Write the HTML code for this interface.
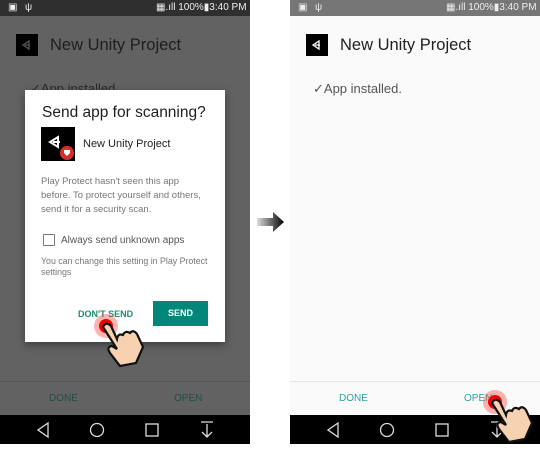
<!DOCTYPE html>
<html><head><style>
*{margin:0;padding:0;box-sizing:border-box}
body{width:540px;height:444px;background:#fff;font-family:"Liberation Sans",sans-serif;position:relative;overflow:hidden}
.a{position:absolute}
.ph{position:absolute;top:0;width:250px;height:444px}
.sb{position:absolute;left:0;top:0;width:250px;height:16px;color:#eee;font-size:10px}
.nav{position:absolute;left:0;top:415px;width:250px;height:29px;background:#000}
.ico{position:absolute;left:16px;top:34px;width:22px;height:22px;background:#000}
.ttl{position:absolute;left:50px;top:36px;font-size:16.5px}
</style></head><body>
<div class="ph" style="left:0;background:#626262">
 <div class="sb" style="background:#2f2f2f">
  <span class="a" style="left:8px;top:2px">&#9635;</span><span class="a" style="left:25px;top:2px">&#968;</span>
  <span class="a" style="left:156px;top:2px">&#9638;.ıll 100%&#9646;3:40 PM</span>
 </div>
 <div class="ico"><svg width="22" height="22"><path d="M7 11l6-4v8z M9 11h5" stroke="#555" fill="none" stroke-width="1.3"/></svg></div>
 <div class="ttl" style="color:#1e1e1e">New Unity Project</div>
 <div class="a" style="left:30px;top:81px;color:#2a2a2a;font-size:13px">✓App installed</div>
 <div class="a" style="left:0;top:381px;width:250px;height:1px;background:#555"></div>
 <div class="a" style="left:49px;top:393px;color:#1f4f4a;font-size:10px">DONE</div>
 <div class="a" style="left:174px;top:393px;color:#1f4f4a;font-size:10px">OPEN</div>
 <div class="a" style="left:25px;top:90px;width:200px;height:252px;background:#fff;box-shadow:0 3px 8px rgba(0,0,0,.4)">
  <div class="a" style="left:17px;top:14px;font-size:15.5px;color:#212121">Send app for scanning?</div>
  <div class="a" style="left:16px;top:37px;width:34px;height:34px;background:#000">
   <svg width="34" height="34"><path d="M9 15l8-5v10z M12 15h7" stroke="#fff" fill="none" stroke-width="2"/><circle cx="26" cy="26" r="7" fill="#d32f2f"/><path d="M23 23h6v3l-3 3-3-3z" fill="#fff"/></svg>
  </div>
  <div class="a" style="left:58px;top:48px;font-size:11px;color:#212121">New Unity Project</div>
  <div class="a" style="left:16px;top:85px;width:170px;font-size:9.5px;line-height:14px;color:#777">Play Protect hasn't seen this app before. To protect yourself and others, send it for a security scan.</div>
  <div class="a" style="left:18px;top:144px;width:12px;height:12px;border:1.5px solid #777;border-radius:1px"></div>
  <div class="a" style="left:36px;top:145px;font-size:10px;color:#555">Always send unknown apps</div>
  <div class="a" style="left:16px;top:166px;width:180px;font-size:8.8px;line-height:11px;color:#777">You can change this setting in Play Protect settings</div>
  <div class="a" style="left:53px;top:219px;font-size:9px;font-weight:bold;color:#1e8e72">DON'T SEND</div>
  <div class="a" style="left:128px;top:211px;width:55px;height:25px;background:#00877a;color:#fff;font-size:9px;font-weight:bold;text-align:center;line-height:25px">SEND</div>
 </div>
 <div class="nav"><svg width="250" height="29"><g stroke="#ddd" fill="none" stroke-width="1.3"><path d="M48 8l-10 7 10 7z"/><circle cx="97" cy="15" r="6.5"/><rect x="146" y="9" width="12" height="12"/><path d="M201 7h12M207 9v13M202 17l5 5 5-5"/></g></svg></div>
</div>
<svg class="a" style="left:255px;top:211px" width="32" height="22"><defs><linearGradient id="g"><stop offset="0" stop-color="#ddd"/><stop offset="1" stop-color="#000"/></linearGradient></defs><path d="M2 7h16V1l11 10-11 10v-6H2z" fill="url(#g)"/></svg>
<div class="ph" style="left:290px;background:#fafafa">
 <div class="sb" style="background:#767676">
  <span class="a" style="left:8px;top:2px">&#9635;</span><span class="a" style="left:25px;top:2px">&#968;</span>
  <span class="a" style="left:156px;top:2px">&#9638;.ıll 100%&#9646;3:40 PM</span>
 </div>
 <div class="ico"><svg width="22" height="22"><path d="M7 11l6-4v8z M9 11h5" stroke="#fff" fill="none" stroke-width="1.3"/></svg></div>
 <div class="ttl" style="color:#212121">New Unity Project</div>
 <div class="a" style="left:23px;top:81px;color:#555;font-size:13px">✓App installed.</div>
 <div class="a" style="left:0;top:381px;width:250px;height:1px;background:#e6e6e6"></div>
 <div class="a" style="left:49px;top:393px;color:#26a69a;font-size:10px">DONE</div>
 <div class="a" style="left:174px;top:393px;color:#26a69a;font-size:10px">OPEN</div>
 <div class="nav"><svg width="250" height="29"><g stroke="#ddd" fill="none" stroke-width="1.3"><path d="M48 8l-10 7 10 7z"/><circle cx="97" cy="15" r="6.5"/><rect x="146" y="9" width="12" height="12"/><path d="M201 7h12M207 9v13M202 17l5 5 5-5"/></g></svg></div>
</div>
<svg class="a" style="left:92px;top:312px" width="62" height="60"><circle cx="14" cy="14" r="12" fill="#f44" opacity=".4"/><circle cx="14" cy="14" r="7" fill="#e00"/><path d="M11 15q3-6 8-1l6 13q1-6 6-4 2-5 7-2 3-4 7 1l6 13-7 16-16 3-10-13q-4-6 2-7l5 3z" fill="#f6d2b0" stroke="#111" stroke-width="2.2"/></svg>
<svg class="a" style="left:481px;top:388px" width="59" height="56"><circle cx="14" cy="14" r="12" fill="#f44" opacity=".4"/><circle cx="14" cy="14" r="7" fill="#e00"/><path d="M11 15q3-6 8-1l6 13q1-6 6-4 2-5 7-2 3-4 7 1l6 13-7 16-16 3-10-13q-4-6 2-7l5 3z" fill="#f6d2b0" stroke="#111" stroke-width="2.2"/></svg>
</body></html>
